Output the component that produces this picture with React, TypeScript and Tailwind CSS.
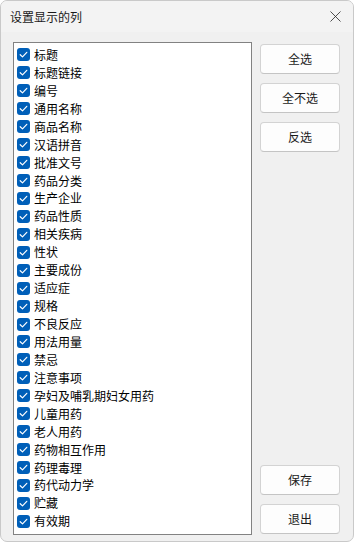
import { X } from "lucide-react";

const columns = [
  "标题",
  "标题链接",
  "编号",
  "通用名称",
  "商品名称",
  "汉语拼音",
  "批准文号",
  "药品分类",
  "生产企业",
  "药品性质",
  "相关疾病",
  "性状",
  "主要成份",
  "适应症",
  "规格",
  "不良反应",
  "用法用量",
  "禁忌",
  "注意事项",
  "孕妇及哺乳期妇女用药",
  "儿童用药",
  "老人用药",
  "药物相互作用",
  "药理毒理",
  "药代动力学",
  "贮藏",
  "有效期",
];

const font = { fontFamily: '"Noto Sans CJK SC", "Noto Sans", sans-serif' };

function CheckBox() {
  return (
    <span className="flex h-[13px] w-[13px] shrink-0 items-center justify-center rounded-[3px] bg-[#005fb8]">
      <svg width="9" height="9" viewBox="0 0 9 9" fill="none">
        <path
          d="M1.2 4.7 L3.5 6.9 L7.8 2.3"
          stroke="white"
          strokeWidth="1.2"
          strokeLinecap="round"
          strokeLinejoin="round"
        />
      </svg>
    </span>
  );
}

function DialogButton({ label }: { label: string }) {
  return (
    <button className="h-[30px] w-[80px] rounded-[4px] border border-[#d3d3d3] border-b-[#c4c4c4] bg-[#fdfdfd] text-[12px] leading-none text-[#1a1a1a]">
      {label}
    </button>
  );
}

export default function App() {
  return (
    <div
      className="flex h-[542px] w-[354px] flex-col overflow-hidden rounded-[7px] border border-[#c9c9c9] bg-[#f0f0f0]"
      style={font}
    >
      {/* Title bar */}
      <div className="flex h-[31px] shrink-0 items-center justify-between bg-[#f3f3f3] pl-[9px] pr-[8px]">
        <span className="text-[12px] leading-none text-[#1a1a1a]">设置显示的列</span>
        <X size={19} strokeWidth={1} className="text-[#222]" />
      </div>

      <div className="flex flex-1 gap-[8px] pl-[12px] pr-[13px] pt-[10px] pb-[6px]">
        {/* Column list */}
        <div className="flex w-[239px] flex-col border border-[#828282] bg-white pt-[3px] pl-[3px]">
          {columns.map((c) => (
            <div key={c} className="flex h-[17.95px] items-center gap-[4px]">
              <CheckBox />
              <span className="text-[12px] leading-none text-black">{c}</span>
            </div>
          ))}
        </div>

        {/* Buttons */}
        <div className="flex flex-col pt-[2px]">
          <div className="flex flex-col gap-[9px]">
            <DialogButton label="全选" />
            <DialogButton label="全不选" />
            <DialogButton label="反选" />
          </div>
          <div className="mt-auto flex flex-col gap-[9px] pb-[1px]">
            <DialogButton label="保存" />
            <DialogButton label="退出" />
          </div>
        </div>
      </div>
    </div>
  );
}
